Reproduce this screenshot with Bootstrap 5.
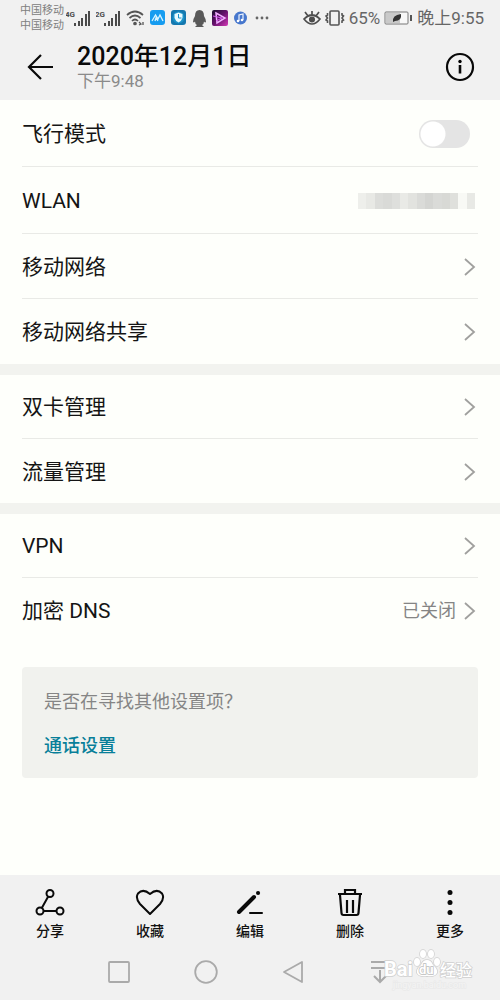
<!DOCTYPE html>
<html lang="zh-CN">
<head>
<meta charset="utf-8">
<meta name="viewport" content="width=device-width, initial-scale=1">
<title>2020年12月1日</title>
<link href="https://cdn.jsdelivr.net/npm/bootstrap@5.3.0/dist/css/bootstrap.min.css" rel="stylesheet">
<style>
  body { font-family: Roboto, "Noto Sans CJK SC", sans-serif; background: #fefffb; color: #151515; }
  svg { display: block; flex: none; }
  .chrome { background: #f1f1f1; }
  .status { height: 36px; padding: 0 16px 0 20px; color: #666; font-size: 17px; line-height: 34px; }
  .carriers { font-size: 11px; line-height: 15px; color: #808080; margin-right: -3px; }
  .status-icons { gap: 5px; }
  .titlebar { height: 64px; padding: 0 24px 2px; }
  .titlebar h1 { font-size: 25px; line-height: 28px; font-weight: 500; color: #0a0a0a; }
  .titlebar p { font-size: 17px; line-height: 20px; color: #8a8a8a; }
  .titles { margin-left: 21px; }
  .group { padding: 0 22px; }
  .group + .group { border-top: 11px solid #f2f3ef; }
  .item { height: 65px; padding-top: 1px; font-size: 21px; line-height: 32px; color: #151515; border-bottom: 1px solid #e9eae6; }
  .item:last-child { border-bottom: 0; }
  .item-tall { height: 67px; }
  .item-short { height: 64px; }
  .item-state { font-size: 18px; color: #858585; }
  .item-end { gap: 8px; padding-right: 2px; }
  .toggle.form-check-input { width: 51px; height: 28px; margin: 0 8px 0 0; border: 0; border-radius: 14px; background-color: #e4e4e4;
    background-image: radial-gradient(circle closest-side, #fff 92%, transparent 100%); background-size: 26px 26px; background-position: left 1px center; background-repeat: no-repeat; }
  .toggle.form-check-input:checked { background-color: #007d99; background-position: right 1px center; }
  .censored { width: 117px; height: 16px; margin-right: 3px;
    background: linear-gradient(90deg, #eeefeb 0 8px, #e8e9e5 8px 17px, #dcddda 17px 25px, #d9dad7 25px 34px, #dedfdc 34px 42px, #e9eae6 42px 50px, #e2e3df 50px 59px, #dadbd8 59px 67px, #d4d5d2 67px 75px, #dadbd8 75px 84px, #d8d9d5 84px 92px, #dfe0dc 92px 100px, #f8f9f5 100px 109px, #e8e9e5 109px); }
  .suggest { margin: 24px 22px; padding: 23px 22px 20px; min-height: 111px; border-radius: 4px; background: #f1f2ee; font-size: 18px; line-height: 24px; }
  .suggest p { color: #858585; margin-bottom: 20px; }
  .suggest a { color: #087f99; font-weight: 500; }
  .tool { height: 69px; padding: 9px 0 0; border: 0; border-radius: 0; color: #111; font-size: 14px; line-height: 20px; font-weight: 500; }
  .tool svg { margin: 0 auto 2px; }
  .sysnav { max-width: 348px; height: 56px; }
  .sysnav svg { margin: 0 auto; }
  .sysnav button { margin-top: -1px; padding-right: 2px !important; }
  .brandmark { right: 20px; bottom: 8px; }
</style>
</head>
<body class="d-flex flex-column min-vh-100">
<header class="chrome">
  <div class="status d-flex align-items-center justify-content-between">
    <div class="status-icons d-flex align-items-center">
      <div class="carriers">中国移动<br>中国移动</div>
      <svg width="25" height="18" viewBox="0 0 25 18" fill="#4b4b4b"><text x="-1" y="8" font-size="8" font-weight="700" font-family="Roboto">4G</text><path d="M8 14h2v3H8zM12 12h2v5h-2zM15 9h2v8h-2zM19 5h2v12h-2zM22 2h2v15h-2z"/></svg>
      <svg width="25" height="18" viewBox="0 0 25 18" fill="#4b4b4b"><text x="-1" y="8" font-size="8" font-weight="700" font-family="Roboto">2G</text><path d="M8 14h2v3H8zM12 12h2v5h-2zM15 9h2v8h-2zM19 5h2v12h-2zM22 2h2v15h-2z"/></svg>
      <svg width="19" height="16" viewBox="0 0 19 16" fill="none" stroke="#555" stroke-width="1.7"><path d="M1 5Q9 -2 17 5M3.500 8Q9 3 14.500 8M6 11Q9 8 12 11"/><circle cx="9" cy="13.500" r="1" fill="#555"/><path d="M13 12l2 2-2 1M17 12v3" stroke-width="1.300"/></svg>
      <svg width="15" height="16" viewBox="0 0 15 16"><rect width="15" height="15" rx="3" fill="#169cf0"/><path d="M2 11L5.500 5 8 9l2-4 3 6M5 11l1-3 2 3" fill="none" stroke="#d7f4ff" stroke-width="1.300"/></svg>
      <svg width="17" height="16" viewBox="0 0 17 16"><rect x="1" width="15" height="15" rx="3" fill="#1478af"/><circle cx="8.500" cy="7.500" r="6" fill="#1b92c9"/><path d="M8.500 2.500l4 1.500v4q-1 3-4 4.500-3-1.500-4-4.500V4z" fill="#e9fbff"/><path d="M8.500 4v4h3" fill="none" stroke="#1b92c9"/></svg>
      <svg width="15" height="17" viewBox="0 0 15 17"><path d="M7.500 0Q12 0 12 6q2 3 2 6-1 1-2-.500Q12 14 10 15l2 2H3l2-2Q3 14 3 11.500 2 13 1 12q0-3 2-6Q3 0 7.500 0z" fill="#595959"/></svg>
      <svg width="16" height="16" viewBox="0 0 16 16"><defs><linearGradient id="neon" x2="1" y2="1"><stop offset="0" stop-color="#16112b"/><stop offset=".5" stop-color="#66106d"/><stop offset="1" stop-color="#d43ab7"/></linearGradient></defs><rect width="16" height="16" rx="2" fill="url(#neon)"/><path d="M4 3l9 5-8 5z" fill="none" stroke="#f0aeff" stroke-width="1.500"/><path d="M1 6l9 2-6 3" fill="none" stroke="#d65cf0"/></svg>
      <svg width="15" height="16" viewBox="0 0 15 16"><circle cx="7.500" cy="8" r="6.500" fill="#4777cd"/><path d="M6 11V5l4-1v6" fill="none" stroke="#eef5ff" stroke-width="1.200"/><circle cx="5" cy="11" r="1.300" fill="#fff"/><circle cx="9" cy="10" r="1.300" fill="#fff"/></svg>
      <svg width="16" height="4" viewBox="0 0 16 4" fill="#666"><circle cx="4" cy="2" r="1.400"/><circle cx="9" cy="2" r="1.400"/><circle cx="14" cy="2" r="1.400"/></svg>
    </div>
    <div class="d-flex align-items-center">
      <svg class="me-1" width="18" height="16" viewBox="0 0 18 16" fill="none" stroke="#4d4d4d" stroke-width="1.700"><path d="M1 9q8-8 16 0-8 10-16 0zM2 2l3 4M9 1v4M16 2l-3 4"/><circle cx="9" cy="9.500" r="2.200" fill="#4d4d4d"/></svg>
      <svg class="me-1" width="20" height="16" viewBox="0 0 20 16" fill="none" stroke="#555" stroke-width="1.600"><rect x="5" y="1" width="9" height="14" rx="1"/><path d="M2.500 3v2l-1.500 1 1.500 2-1.500 2 1.500 1v2M17 3v2l1.500 1-1.500 2 1.500 2-1.500 1v2"/></svg>
      <span>65%</span>
      <svg class="ms-1 me-1" width="29" height="14" viewBox="0 0 29 14"><rect x="1" y="1" width="23" height="12" rx="1" fill="#f8f8f8" stroke="#777"/><path d="M2 2h14v10H2z" fill="#c9c9c9"/><path d="M9 11q-1-7 8-8 1 7-6 7" fill="#333"/><path d="M26 4h2v6h-2z" fill="#555"/></svg>
      <span>晚上9:55</span>
    </div>
  </div>
  <div class="titlebar d-flex align-items-center">
    <button class="btn p-0 border-0" type="button" aria-label="返回">
      <svg width="32" height="30" viewBox="0 0 32 30" fill="none" stroke="#0a0a0a" stroke-width="2.200"><path d="M29 15H5M17 3L5 15l12 12"/></svg>
    </button>
    <div class="titles">
      <h1 class="m-0">2020年12月1日</h1>
      <p class="m-0">下午9:48</p>
    </div>
    <button class="btn p-0 border-0 ms-auto" type="button" aria-label="详情">
      <svg width="32" height="30" viewBox="0 0 32 30"><circle cx="16" cy="15" r="13" fill="none" stroke="#080808" stroke-width="2.200"/><circle cx="16" cy="9.500" r="1.700"/><path d="M16 13v8.500" stroke="#080808" stroke-width="2.600"/></svg>
    </button>
  </div>
</header>

<main>
  <section class="group">
    <div class="item item-tall d-flex align-items-center justify-content-between">
      <label for="airplane">飞行模式</label>
      <input class="form-check-input toggle" type="checkbox" role="switch" id="airplane">
    </div>
    <a href="#" class="item item-tall d-flex align-items-center justify-content-between text-decoration-none">WLAN<span class="censored"></span></a>
    <a href="#" class="item d-flex align-items-center justify-content-between text-decoration-none">移动网络<span class="item-end"><svg width="12" height="20" viewBox="0 0 12 20" fill="none" stroke="#a0a09e" stroke-width="1.800"><path d="M1 2l9 8-9 8"/></svg></span></a>
    <a href="#" class="item d-flex align-items-center justify-content-between text-decoration-none">移动网络共享<span class="item-end"><svg width="12" height="20" viewBox="0 0 12 20" fill="none" stroke="#a0a09e" stroke-width="1.800"><path d="M1 2l9 8-9 8"/></svg></span></a>
  </section>
  <section class="group">
    <a href="#" class="item item-short d-flex align-items-center justify-content-between text-decoration-none">双卡管理<span class="item-end"><svg width="12" height="20" viewBox="0 0 12 20" fill="none" stroke="#a0a09e" stroke-width="1.800"><path d="M1 2l9 8-9 8"/></svg></span></a>
    <a href="#" class="item item-short d-flex align-items-center justify-content-between text-decoration-none">流量管理<span class="item-end"><svg width="12" height="20" viewBox="0 0 12 20" fill="none" stroke="#a0a09e" stroke-width="1.800"><path d="M1 2l9 8-9 8"/></svg></span></a>
  </section>
  <section class="group">
    <a href="#" class="item item-short d-flex align-items-center justify-content-between text-decoration-none">VPN<span class="item-end"><svg width="12" height="20" viewBox="0 0 12 20" fill="none" stroke="#a0a09e" stroke-width="1.800"><path d="M1 2l9 8-9 8"/></svg></span></a>
    <a href="#" class="item d-flex align-items-center justify-content-between text-decoration-none">加密 DNS<span class="item-end item-state d-flex align-items-center">已关闭<svg width="12" height="20" viewBox="0 0 12 20" fill="none" stroke="#a0a09e" stroke-width="1.800"><path d="M1 2l9 8-9 8"/></svg></span></a>
  </section>
  <section class="suggest">
    <p>是否在寻找其他设置项？</p>
    <a href="#" class="text-decoration-none">通话设置</a>
  </section>
</main>

<footer class="chrome mt-auto position-relative">
  <div class="row g-0 row-cols-5">
    <button type="button" class="btn tool col">
      <svg width="32" height="32" viewBox="0 0 32 32" fill="none" stroke="#0a0a0a" stroke-width="2"><circle cx="16" cy="6.500" r="3.500"/><circle cx="6" cy="24" r="3.500"/><circle cx="26" cy="24" r="3.500"/><path d="M14.200 9.500L7.800 21M9.500 24h13"/></svg>分享</button>
    <button type="button" class="btn tool col">
      <svg width="32" height="32" viewBox="0 0 32 32" fill="none" stroke="#0a0a0a" stroke-width="2" stroke-linejoin="round"><path d="M16 27L6 17Q1 11 4 6.500 9 1 16 7 23 1 28 6.500 31 11 26 17z"/></svg>收藏</button>
    <button type="button" class="btn tool col">
      <svg width="32" height="32" viewBox="0 0 32 32" fill="none" stroke="#0a0a0a" stroke-linecap="round"><path d="M5 25L20 10" stroke-width="4"/><path d="M24 6h.1" stroke-width="4"/><path d="M16 26h12" stroke-width="2"/></svg>编辑</button>
    <button type="button" class="btn tool col">
      <svg width="32" height="32" viewBox="0 0 32 32" fill="none" stroke="#0a0a0a" stroke-width="2.200"><path d="M4 7h24M11 6V3h10v3M6 8l1.500 18q.1 2 2 2h13q1.900 0 2-2L26 8M13 13v13M19 13v13"/></svg>删除</button>
    <button type="button" class="btn tool col">
      <svg width="32" height="32" viewBox="0 0 32 32" fill="#0a0a0a"><circle cx="16" cy="5.500" r="2.500"/><circle cx="16" cy="15.500" r="2.500"/><circle cx="16" cy="25.500" r="2.500"/></svg>更多</button>
  </div>
  <div class="sysnav row g-0 row-cols-4 mx-auto align-items-center">
    <button type="button" class="btn p-0 border-0 col" aria-label="最近任务"><svg width="24" height="24" viewBox="0 0 24 24" fill="none" stroke="#aaa" stroke-width="1.800"><rect x="2" y="2" width="20" height="20" rx="1"/></svg></button>
    <button type="button" class="btn p-0 border-0 col" aria-label="主页"><svg width="24" height="24" viewBox="0 0 24 24" fill="none" stroke="#aaa" stroke-width="1.800"><circle cx="12" cy="12" r="10.800"/></svg></button>
    <button type="button" class="btn p-0 border-0 col" aria-label="后退"><svg width="24" height="24" viewBox="0 0 24 24" fill="none" stroke="#aaa" stroke-width="1.800" stroke-linejoin="round"><path d="M21 2v20L3 12z"/></svg></button>
    <button type="button" class="btn p-0 border-0 col" aria-label="下拉通知"><svg width="24" height="24" viewBox="0 0 24 24" fill="none" stroke="#aaa" stroke-width="2"><path d="M3 2h18M3 8h18M12 10v12M6 16l6 6 6-6"/></svg></button>
  </div>
  <svg class="brandmark position-absolute pe-none" width="98" height="44" viewBox="0 0 98 44" fill="#fff" stroke="#cfcfcf" stroke-width="1.500" paint-order="stroke" font-family="Roboto, 'Noto Sans CJK SC', sans-serif">
    <text x="2" y="28" font-size="20" font-weight="700">Bai</text>
    <ellipse cx="35" cy="14" rx="3" ry="4"/><ellipse cx="41" cy="6" rx="3" ry="4"/><ellipse cx="49" cy="6" rx="3" ry="4"/><ellipse cx="55" cy="14" rx="3" ry="4"/>
    <path d="M45 12q4 0 6 5 5 4 4 8-2 4-10 3-8 1-10-3-1-4 4-8 2-5 6-5z"/>
    <text x="37" y="26" font-size="13" font-weight="700" stroke="#bdbdbd">du</text>
    <text x="58" y="28" font-size="16" font-weight="500">经验</text>
    <text x="11" y="40" font-size="9" fill="#f4f4f4" stroke="#eaeaea">jingyan.baidu.com</text>
  </svg>
</footer>
<script src="https://cdn.jsdelivr.net/npm/bootstrap@5.3.0/dist/js/bootstrap.bundle.min.js"></script>
</body>
</html>
